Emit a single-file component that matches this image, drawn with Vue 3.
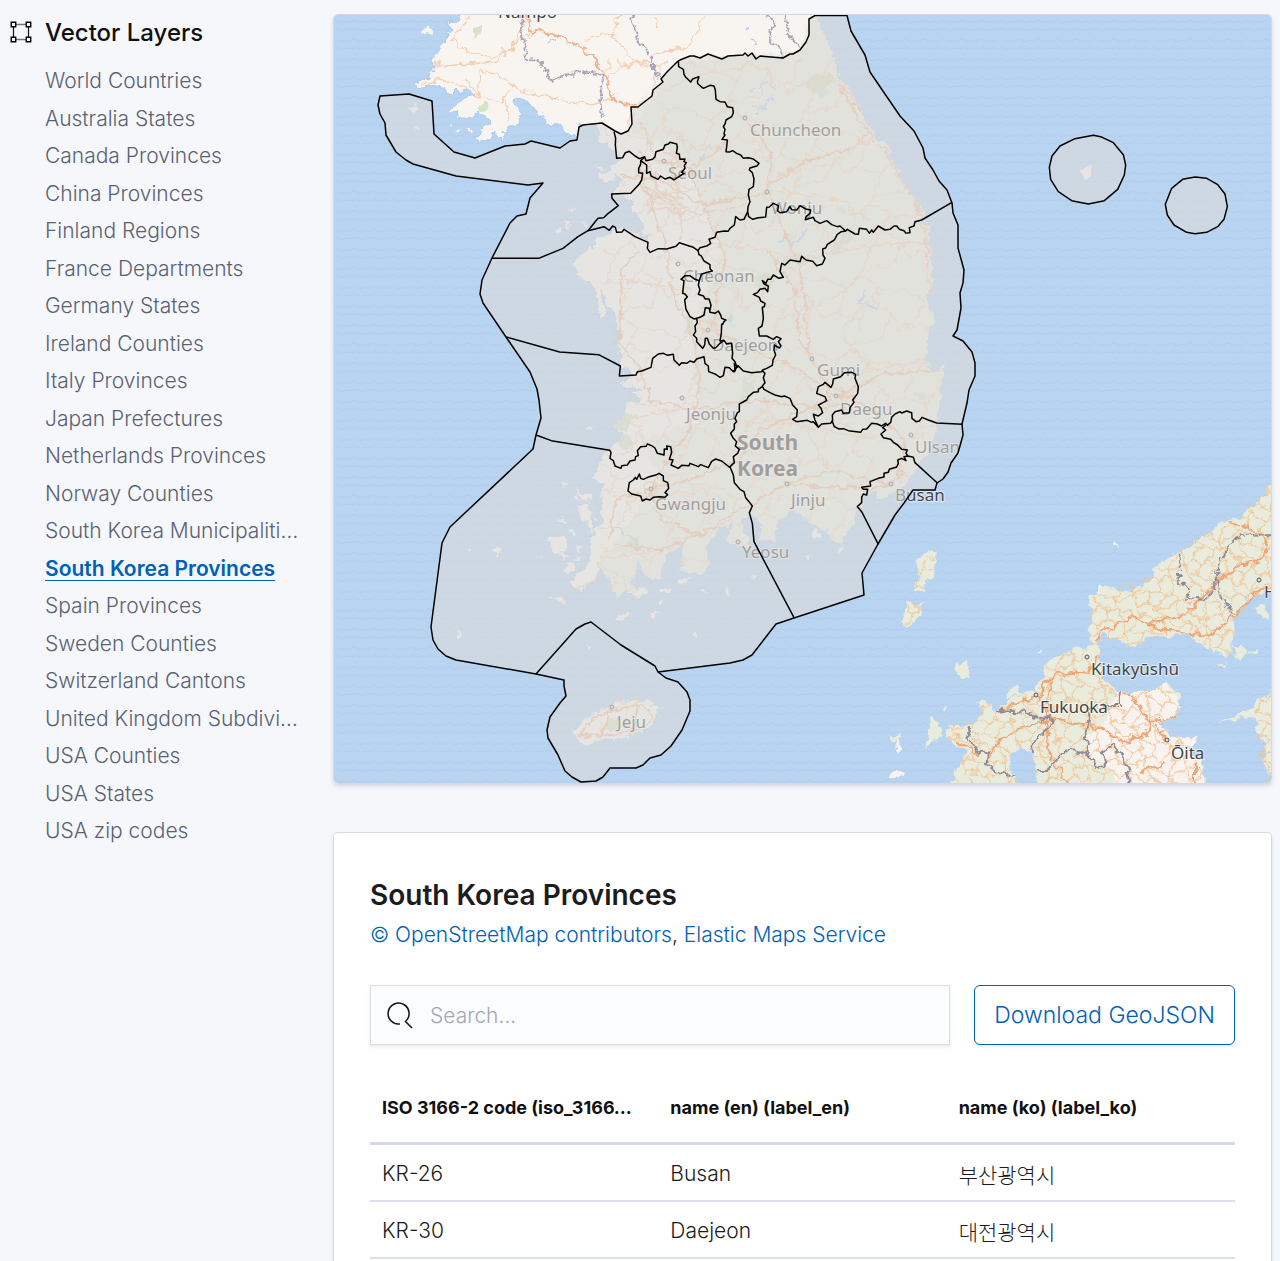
<script setup>
import { ref } from 'vue'

const layers = [
  'World Countries', 'Australia States', 'Canada Provinces', 'China Provinces',
  'Finland Regions', 'France Departments', 'Germany States', 'Ireland Counties',
  'Italy Provinces', 'Japan Prefectures', 'Netherlands Provinces', 'Norway Counties',
  'South Korea Municipalities', 'South Korea Provinces', 'Spain Provinces',
  'Sweden Counties', 'Switzerland Cantons', 'United Kingdom Subdivisions',
  'USA Counties', 'USA States', 'USA zip codes',
]
const selected = ref('South Korea Provinces')
const query = ref('')

const rows = [
  { code: 'KR-26', en: 'Busan', ko: '부산광역시' },
  { code: 'KR-30', en: 'Daejeon', ko: '대전광역시' },
]

// Label anchor (x, y) and town marker (cx, cy) in map units
const cities = [
  { name: 'Nampo', x: 498, y: 18 },
  { name: 'Chuncheon', x: 750, y: 136, cx: 745, cy: 118 },
  { name: 'Seoul', x: 668, y: 179, cx: 664, cy: 161 },
  { name: 'Wonju', x: 771, y: 214, cx: 767, cy: 192 },
  { name: 'Cheonan', x: 683, y: 282, cx: 678, cy: 264 },
  { name: 'Daejeon', x: 712, y: 351, cx: 708, cy: 330 },
  { name: 'Gumi', x: 817, y: 376, cx: 812, cy: 359 },
  { name: 'Jeonju', x: 686, y: 420, cx: 682, cy: 398 },
  { name: 'Daegu', x: 840, y: 415, cx: 836, cy: 396 },
  { name: 'Ulsan', x: 915, y: 453, cx: 911, cy: 435 },
  { name: 'Jinju', x: 791, y: 506, cx: 787, cy: 484 },
  { name: 'Busan', x: 895, y: 501, cx: 891, cy: 484 },
  { name: 'Gwangju', x: 655, y: 510, cx: 651, cy: 489 },
  { name: 'Yeosu', x: 742, y: 558, cx: 738, cy: 542 },
  { name: 'Jeju', x: 617, y: 728, cx: 612, cy: 707 },
  { name: 'Kitakyūshū', x: 1091, y: 675, cx: 1087, cy: 657 },
  { name: 'Fukuoka', x: 1040, y: 713, cx: 1036, cy: 695 },
  { name: 'Ōita', x: 1171, y: 759, cx: 1167, cy: 740 },
  { name: 'Hiroshima', x: 1264, y: 598, cx: 1259, cy: 580 },
]
</script>

<template>
  <div class="page">
    <nav class="sidebar" aria-labelledby="layers-title">
      <svg class="vector-icon" viewBox="0 0 24 24" aria-hidden="true">
        <path d="M7 4.5h10M7 19.5h10" stroke="#777" stroke-width="1.5" />
        <path d="M4.5 7v10M19.5 7v10" stroke="#111" stroke-width="1.2" />
        <path d="M2.3 2.3h4.4v4.4h-4.4zM17.3 2.3h4.4v4.4h-4.4zM2.3 17.3h4.4v4.4h-4.4zM17.3 17.3h4.4v4.4h-4.4z" fill="#fff" stroke="#000" stroke-width="1.4" />
      </svg>
      <div class="layer-menu">
        <h2 id="layers-title">Vector Layers</h2>
        <ul>
          <li v-for="layer in layers" :key="layer">
            <a href="#" :class="{ active: layer === selected }" @click.prevent="selected = layer">{{ layer }}</a>
          </li>
        </ul>
      </div>
    </nav>

    <main class="content">
      <section class="map-panel" aria-label="Map">
        <svg class="map" viewBox="334 15 937 768">
          <defs>
            <pattern id="waves" x="334" y="16" width="19" height="19" patternUnits="userSpaceOnUse">
              <path d="M0 4q2.5 0 4.7 2t4.8 0t4.7 0t4.8-2M0 14q2.5-3 4.7-1t4.8 1t4.7-1t4.8 1" fill="none" stroke="#a9c8e6" stroke-opacity=".5" />
            </pattern>
            <pattern id="mesh" width="44" height="40" patternUnits="userSpaceOnUse" patternTransform="rotate(12)">
              <path d="M0 5L8 9L15 3L25 7L33 1L44 5M8 9L7 20L0 24M7 20L17 23L23 16L25 7M23 16L32 20L40 15L44 24M40 15L33 1L32 0M17 23L16 32L5 35L0 24M16 32L27 36L32 20M27 36L32 40M44 24L37 32L27 36M5 35L9 40M15 3L9 0" fill="none" stroke="#f0c393" stroke-width="1.2" />
            </pattern>
            <pattern id="mesh-wide" width="78" height="74" patternUnits="userSpaceOnUse" patternTransform="rotate(8)">
              <path d="M0 14L20 20L33 5L54 15L78 14M20 20L15 45L0 54M15 45L39 50L46 32L54 15M46 32L69 38L78 54M39 50L34 74M69 38L63 63L34 74M33 5L34 0" fill="none" stroke="#f3c9a8" stroke-width="1.2" />
            </pattern>
            <filter id="rough" x="0" y="0" width="100%" height="100%">
              <feTurbulence type="fractalNoise" baseFrequency=".11" numOctaves="3" seed="7" />
              <feDisplacementMap in="SourceGraphic" scale="11" xChannelSelector="R" yChannelSelector="G" />
            </filter>
            <path id="korea" d="M466 8L458 20L446 22L451 30L443 43L434 57L435 70L430 77L411 84L423 87L435 85L450 92L470 90L475 95L460 100L448 110L455 113L461 118L473 118L480 112L490 120L476 138L486 143L496 133L500 140L505 127L515 125L523 113L513 102L520 98L536 110L550 125L563 127L575 137L580 124L596 126L600 142L612 147L620 160L606 173L623 180L612 190L630 200L634 212L642 226L648 244L640 232L623 228L610 232L596 240L586 250L573 262L580 280L590 283L597 300L600 318L608 316L602 290L611 310L619 333L616 353L623 365L633 377L616 382L623 387L643 388L633 393L640 400L626 403L623 417L610 427L623 432L610 447L596 467L593 480L603 487L600 507L603 520L590 540L591 560L570 583L580 593L596 580L600 567L610 580L616 600L626 590L636 600L633 580L640 560L646 580L660 578L666 557L686 540L680 570L700 577L710 563L706 547L720 527L732 527L727 540L746 550L748 537L740 523L750 513L763 523L760 537L773 543L780 520L793 510L813 523L827 530L840 543L853 523L860 507L867 490L883 500L900 490L910 477L927 457L933 440L940 410L942 390L945 363L933 373L927 363L928 340L933 317L927 300L933 280L930 250L928 227L920 207L897 167L887 147L867 123L857 103L840 77L830 47L815 8Z" />
            <g id="islets">
              <path d="M425 26l8 3-2 4-9-2zM407 106l10-1 3 5-7 4zM413 127l6-2-1 5zM570 259l14 12-6 8zM548 540l16-4 4 14-14 4zM556 520l9-3 3 8zM578 505l14 6-3 12-8-2zM492 550l10-2-5 9zM598 172l13 0 4 8-12 2zM565 565l9-3 0 8-7 3zM550 597l12 0 5 8zM576 488l12 8-3 5zM568 207l8 3-3 3zM580 222l9 1-2 4zM585 521l8 0 0 12zM455 628l7 7-4 0zM632 592l14-6 2 8-10 4zM678 578l11-2-2 8-9 1zM586 646l7 2-3 3zM1080 169l11-4 1 7-6 5-6-4z" />
              <path d="M448 126l5-2-2 5zM456 132l4-2 0 4zM469 128l5 0-3 6zM592 165l14 2-6 4zM566 224l5-3-1 6zM556 230l4-2 0 5zM561 482l6 2-3 5zM572 497l6-2 2 7zM585 494l8 3-3 5zM568 528l7 2-2 7zM576 544l6 3-4 6zM560 552l9 3-5 7zM573 560l5-2 1 5zM538 558l5-2-1 4zM582 505l6 0-2 6zM594 514l4 4-3 4zM587 429l6-5-2 6zM469 548l4-3-2 6zM692 634l6 0-3 5zM650 615l7-3 0 6-6 2zM616 615l12-4-2 8-10 2zM725 588l6 4-5 3zM700 590l5-2 1 5zM660 590l10-4-3 8zM655 600l7-1-2 5zM812 528l10 6-3 6-8-5zM840 544l4 4-5 4zM752 574l6 4-3 3zM806 556l4-1 0 4zM660 660l3 0-1 3zM660 706l3-1-1 4zM890 775l10-6 4 6-10 6zM893 752l6-14 2 4-4 14zM1113 546l4-3 1 5zM1094 590l8-4 0 5zM1036 654l5-2-1 4z" />
              <path d="M575 730L582 722L600 710L626 700L646 700L656 707L656 718L643 732L616 739L596 741L587 745L576 737Z" />
            </g>
            <g id="japan" transform="translate(870 520) scale(.33333)">
              <path d="M1240 -150L1160 -50L1110 -10L1050 10L1000 50L960 85L890 110L850 160L820 200L760 215L700 205L655 230L670 290L655 320L670 380L700 345L750 360L790 385L830 350L900 350L950 340L1000 380L1070 415L1090 370L1090 300L1130 235L1180 215L1240 240Z" />
              <path d="M690 380L665 375L600 390L525 430L515 480L490 510L430 530L385 570L340 545L325 600L290 620L230 615L230 660L290 700L250 760L250 830L450 830L415 710L450 680L490 700L510 830L1010 830L995 730L960 700L985 655L910 655L865 640L860 610L920 590L935 545L920 510L885 490L840 515L830 535L740 515L700 480L690 440Z" />
              <path d="M1240 495L1160 540L1145 570L1040 610L1150 590L1160 630L1190 680L1180 740L1240 830Z" />
              <path d="M185 88L200 95L195 150L165 190L165 215L130 210L145 170L140 130L150 110ZM110 245L150 255L165 240L140 300L115 322L98 310ZM265 422L290 430L300 460L275 475L255 450ZM178 590L215 620L195 670L160 685L180 650ZM1085 385l30-10 20 20-30 20zM1150 260l30-5 20 30-20 15zM410 515l30-15 10 20-40 15zM215 560l20 5-15 10zM60 650l25-10 10 10-20 15zM1130 400l40-20-10 20zM1040 440l30-15-10 15zM320 550l20-10 15 25-20 5z" />
            </g>
            <clipPath id="clip-land">
              <use href="#korea" />
              <path d="M575 730L582 722L600 710L626 700L646 700L656 707L656 718L643 732L616 739L596 741L587 745L576 737Z" />
            </clipPath>
            <clipPath id="clip-honshu"><path d="M1290 468L1233 520L1190 544L1153 573L1110 592L1088 597L1093 617L1088 627L1093 647L1103 635L1133 648L1147 637L1187 633L1226 658L1233 643L1233 620L1263 592L1290 600Z" /></clipPath>
            <clipPath id="clip-kyushu"><path d="M1100 647L1070 650L1045 663L1042 680L1033 690L998 710L983 702L978 720L947 725L947 740L967 753L953 773L953 795L1020 795L1008 757L1020 747L1033 753L1040 795L1207 795L1202 763L1190 753L1198 738L1173 738L1157 723L1177 717L1182 702L1165 683L1150 692L1117 692L1103 680ZM932 550L936 565L924 590L914 590L920 565ZM907 602L923 602L917 620L903 625ZM1290 685L1256 700L1257 730L1265 790L1290 800Z" /></clipPath>
          </defs>

          <!-- Sea -->
          <rect class="sea" x="334" y="15" width="937" height="768" />
          <rect x="334" y="15" width="937" height="768" fill="url(#waves)" />

          <!-- Land, roads and administrative lines -->
          <g filter="url(#rough)">
            <rect x="320" y="0" width="965" height="800" fill="none" />
            <g fill="#f8f4f0" stroke="#a6c9ec" stroke-width="1">
              <use href="#korea" />
              <use href="#islets" stroke="none" />
            </g>
            <use href="#japan" fill="#e9ecdd" />
            <path d="M1117 692L1103 724L1085 735L1086 754L1096 762L1110 765L1120 795L1207 795L1202 763L1190 753L1198 738L1173 738L1157 723L1177 717L1182 702L1165 683L1150 692Z" fill="#f8f3ef" />

            <g clip-path="url(#clip-land)">
              <path d="M677 62L720 58L800 50L815 8L960 200L960 500L840 560L700 600L600 620L600 560L660 480L640 440L700 420L690 330L720 250L690 160L630 130Z" fill="#ebede2" />
              <g fill="#d3e3c6">
                <path d="M806 78l14-6 17 6-7 10-10 10-12-10z" />
                <path d="M826 254l22-24 6 4-18 20zM782 262l20-10 14 6-16 8zM610 427l14-14 10 4-5 14zM616 436l12-2 6 10-10 6zM626 543l10-5 4 6-12 6zM684 318l8-2 2 18-10-2zM743 380l12 0-4 20-10 0zM753 280l14-6 8 6-12 14zM606 720l12-5 0 14-12 0zM915 392l12 2-4 10zM472 30l10-6 0 8-8 4zM477 108l8-5 2 6-9 2z" />
              </g>
              <rect x="600" y="60" width="360" height="690" fill="url(#mesh-wide)" opacity=".85" />
              <g fill="none" stroke="#a8cbee" stroke-width="1.5">
                <path d="M751 88l8 0 6-4 8 1M755 108l10-2 8-8M752 115l14-8M777 242l10-6 6 8 10-8 4-8M790 240l2 10M865 290l-4 14 12 4 8-6M805 300l2 10M700 162l10-18M728 318l6 10M640 550l-10-14-16-10M548 42l8-1M552 98l7-1M744 30l6-1M752 40l4 4" />
              </g>
              <g fill="none" stroke="#f3cfb0" stroke-width="1.3">
                <path d="M470 15L452 40L465 50L490 58L510 50L528 15M433 62L445 66L495 62L520 38L540 30M423 84L440 80L466 88L480 98L478 70L495 74L520 90L560 100L590 105L620 95M583 42L612 32L632 60L650 62M618 15L614 35M654 14L657 30M705 15L690 45L650 56M466 80L478 94L500 104L510 90M505 100l4 20M500 45L506 58" />
                <path d="M608 74L640 60M668 130L700 150L730 142M680 60L712 70L760 66L790 92L812 80L840 84M745 120L770 150L774 175L830 165L870 140L880 112L845 90M770 190L840 200L880 230M620 280L690 290M690 240L770 250L800 262L840 250L930 240M850 290L780 320M870 300L840 330L870 370L930 360M620 420L680 410M630 500L700 490L730 500M720 430L770 420L880 440M800 420L830 470M590 600L600 560L660 550L710 530M580 590L600 575" />
              </g>
              <g fill="none" stroke="#efbd98" stroke-width="2">
                <path d="M640 150L645 190L665 240L672 290L690 330L700 380L690 430L660 470L650 490L615 500L610 540M660 160L690 170L710 220L725 260L718 290L712 330L750 350L800 370L836 396L860 400L905 440L900 480L870 490L787 484M620 175L660 180L700 205L767 192L772 150L750 125M768 190L800 270L810 360L830 385M767 250L795 290L800 340L815 360M836 396L880 375L940 370M690 170L730 140M767 185L810 160L860 145L870 120L842 92M640 250L622 270L620 340L640 370L650 400L690 410L760 400L830 410M651 489L690 480L740 460L760 430L830 400M651 489L660 520L700 535L660 550L615 545M787 484L740 510L700 535M787 484L830 470L890 484M580 735L600 714L640 704L652 712L640 730L600 736ZM610 708l-6 26M638 704l-4 26" />
                <path d="M640 120L660 165L690 160M650 200L690 190M645 205L700 215L745 205M655 180L650 215M670 160L680 200L682 240M640 185L690 210M648 160l10 30 20 10M640 170l40 12M660 150l20 10 4 20M655 195l30 20M840 85L860 120L890 160L915 200L925 230L930 300M702 322l14 0 2 18-16 2zM828 388l14 0 2 16-16 2zM644 484l12 0 0 10-12 2z" stroke-opacity=".8" />
              </g>
              <path d="M527 16L532 30L560 36L585 50L600 66L608 80L612 100L635 106" fill="none" stroke="#efb28a" stroke-width="2" />
              <g fill="none" stroke="#aaa4b6" stroke-width="2">
                <path d="M520 17L523 42L528 58L542 63L552 80L580 71L604 75L600 95L602 118M632 15L638 40L652 56L652 68L661 80M767 15L774 24L768 42L783 50L780 58M786 15L788 34L800 48" stroke-dasharray="8 1" />
              </g>
            </g>

            <g clip-path="url(#clip-honshu)">
              <rect x="1080" y="460" width="200" height="210" fill="url(#mesh)" />
              <g fill="none" stroke="#eda574" stroke-width="2"><path d="M1097 645L1100 632L1135 617L1146 624L1180 617L1195 605L1220 580L1240 565L1262 560L1268 545L1262 533L1225 520M1146 624L1175 632L1208 636L1235 615L1255 592L1272 585" /></g>
              <g fill="none" stroke="#8e8a96" stroke-width="2" stroke-dasharray="6 1"><path d="M1178 550L1180 572L1178 583L1186 584L1188 598L1205 600L1212 590L1217 578L1218 568L1228 547L1240 535L1275 534M1218 580L1225 604L1233 613" /></g>
            </g>
            <g clip-path="url(#clip-kyushu)">
              <rect x="900" y="540" width="380" height="245" fill="url(#mesh)" />
              <g fill="none" stroke="#eda574" stroke-width="2"><path d="M1098 655L1088 672L1058 674L1045 680L1042 695L1015 705L998 712M1100 670L1110 685L1130 694L1150 722L1145 735L1125 742L1100 728L1055 718L1020 728L1000 740L987 760M1150 722L1167 720L1180 714M1167 740L1155 725M955 740L975 752L990 752M1052 680L1046 710L1050 758L1068 782M1165 762L1140 772M1196 764L1196 785" /></g>
              <g fill="none" stroke="#8e8a96" stroke-width="2"><path d="M998 710L1028 712L1040 720L1052 715L1050 728L1032 744L1033 753M1122 692L1120 706L1104 706M1091 706L1085 730L1088 754L1066 750L1054 762L1045 771L1038 771M1088 754L1098 768L1104 765L1102 750L1112 746L1124 758L1130 785M968 728L975 748L988 754L986 764L1000 774L1015 777" /></g>
            </g>
          </g>

          <!-- Place names -->
          <g class="places">
            <template v-for="city in cities" :key="city.name">
              <circle v-if="city.cx" :cx="city.cx" :cy="city.cy" r="2" />
              <text :x="city.x" :y="city.y">{{ city.name }}</text>
            </template>
            <text class="country" x="737" y="450">South</text>
            <text class="country" x="737" y="476">Korea</text>
          </g>

          <!-- Province shapes -->
          <g class="provinces">
            <path class="area" d="M380 96L409 94L432 101L434 134L454 152L475 158L505 146L525 144L531 141L560 148L570 141L577 140L579 127L583 125L602 123L615 131L621 134L628 131L632 124L631 107L638 107L643 103L652 96L653 90L663 82L661 79L667 72L677 62L680 60L690 56L694 56L700 58L708 54L722 59L728 56L743 55L745 53L748 56L752 53L756 59L760 56L783 58L790 54L793 54L800 50L806 42L809 35L809 19L815 15.5L847 15.5L851 31L865 55L870 72L887 97L900 116L914 131L923 148L925 158L933 170L939 181L947 190L952 203L953 213L958 225L958 248L964 270L963 283L960 293L961 308L957 330L953 336L963 341L972 352L975 363L975 376L969 390L967 403L962 424L963 435L958 453L951 463L948 472L943 479L937 483L935 490L913 490L904 503L895 515L878 544L862 573L864 595L794 618L776 624L752 655L743 660L730 663L658 672L666 678L678 682L687 692L690 700L690 711L682 730L671 746L661 755L650 758L643 765L636 768L610 768L603 777L596 781L581 782L572 777L565 771L558 755L548 738L547 730L550 717L560 703L566 696L564 686L564 680L536 674L456 660L446 656L438 649L433 640L431 627L442 543L450 527L533 449L536 435L541 418L539 400L537 389L530 372L506 337L483 303L480 294L482 280L492 258L510 223L517 216L526 214L530 198L543 183L528 185L456 176L413 164L406 160L396 152L386 135L385 123L380 114L378 105Z" />
            <g transform="translate(600 10) scale(.33333)">
              <path d="M235 152L236 170L250 178L252 193L256 200L272 216L278 207L297 200L292 215L294 222L310 235L330 226L342 228L346 240L348 268L360 275L375 276L382 290L398 293L400 308L395 320L378 330L375 342L370 350L375 358L372 372L375 375L366 388L382 390L380 410L378 425L388 426L398 422L410 430L422 435L430 445L445 443L460 447L477 460L472 467L450 474L448 480L457 488L462 507L460 530L447 538L445 555L450 575L444 590L443 605L446 620L458 628L475 623L497 621L500 592L508 591L520 580L535 587L533 603L540 608L560 605L570 590L575 599L590 600L600 587L617 597L632 600L630 610L618 620L616 629L640 622L645 632L660 640L680 632L695 644L712 650L720 648L737 663L742 658L765 672L775 673L778 655L800 658L808 670L815 660L820 667L835 648L855 660L870 658L882 648L890 648L898 658L912 662L917 669L930 668L928 653L942 648L945 635L965 630L1056 577" />
              <path d="M443 605L432 628L420 630L407 620L403 645L390 655L384 664L373 663L350 667L345 682L327 688L332 700L322 707L300 713L294 722L280 712L265 707L238 698L228 709L200 717L175 716L150 727L142 715L144 697L105 680L72 658L66 666L50 667L46 652L38 648L28 661L12 650L-36 662L-66 680L-111 715L-184 745L-324 745" />
              <path d="M294 722L297 734L304 738L312 753L330 764L330 776L337 783L322 787L304 793L298 812" />
              <path d="M42 365L47 385L46 405L50 445L68 443L76 428L88 424L105 438L118 446L134 440L138 452L158 448L165 440L168 425L190 418L195 405L205 402L210 397L230 402L232 412L229 430L238 433L240 448L255 447L252 455L259 458L253 467L255 475L245 487L252 490L232 503L222 510L210 502L195 507L182 498L174 508L153 498L150 485L140 490L140 465L122 452L135 440M122 452L122 462L116 476L116 488L128 490L125 510L118 522L92 550L35 552L36 565L55 587L20 614L11 623L-6 625L-36 662" />
              <path d="M737 663L724 665L712 673L703 690L682 703L677 714L668 717L669 735L675 745L667 762L650 767L638 754L618 750L605 739L600 755L570 750L555 765L545 760L540 785L550 802L537 805L520 795L512 808L503 808L498 820L487 812L492 822L505 828L503 845L495 835L480 838L472 848L460 853L478 862L482 873L495 880L493 890L487 892L490 925L486 948L475 955L478 978L500 978L520 988L530 980L543 986L535 995L543 1008L538 1014L523 1005L522 1020L527 1035L519 1050L517 1066L500 1075L488 1080L485 1085L455 1088L430 1083L415 1068L403 1078" />
            </g>
            <g transform="translate(600 230) scale(.33333)">
              <path d="M298 152L295 165L300 180L295 193L310 198L316 207L327 207L333 225L330 240" />
              <path d="M298 152L285 148L270 137L255 137L243 148L252 152L248 190L255 192L262 200L254 210L258 238L270 260L283 267L300 262L312 255L316 233L328 235L330 247L345 250L355 243L362 255L365 265L378 270L372 275L368 283L365 283L364 310L360 333L372 331L380 342L395 340L398 370L396 385L405 395L410 410L403 427M290 265L292 278L285 288L287 305L280 315L290 325L290 335L308 355L314 345L316 325L322 325L328 342L340 355L347 353L360 340L372 331" />
              <path d="M-281 321L-121 366L-4 374L61 408L58 438L108 435L112 425L125 423L153 412L158 385L175 372L190 370L203 376L220 373L222 390L238 406L245 398L260 400L270 393L282 397L290 387L312 380L315 400L325 408L326 425L345 432L360 442L370 437L375 412L388 413L400 425L405 418L403 400L412 412L415 405" />
              <path d="M487 422L495 430L490 443L495 458L487 468L492 478L510 488L525 495L545 500L553 498L570 505L578 525L592 540L590 560L578 568L590 575L622 571L635 577L640 575L655 592L665 582L692 580L697 572M655 592L645 570L640 553L655 558L668 548L663 535L655 525L665 520L680 512L675 500L650 490L655 470L670 463L675 457L693 472L698 462L700 447L722 440L733 428L755 427L767 433L765 445L775 470L773 490L758 510L762 517L750 533L748 548L730 550L725 540L705 545L697 555L698 577L703 590L717 597L730 596L745 602L782 607L788 598L800 597L815 580L832 582L845 588L857 580L862 586L872 577L875 562L885 552L900 545L905 549L920 543L935 548L936 565L948 575L958 573L966 562L985 570L1010 579L1087 583" />
              <path d="M487 470L475 478L475 485L460 487L445 500L440 510L418 522L418 545L412 548L405 565L410 575L403 582L403 597L392 610L400 625L410 635L406 648L418 658L413 670L400 680L403 698L390 710L400 735L403 758L420 778L432 785L437 803L447 815L457 828L448 848L457 880L462 935L582 1163" />
            </g>
            <g transform="translate(600 390) scale(.33333)">
              <path d="M-192 135L-146 152L29 181L33 187L30 205L40 212L45 228L63 235L65 227L82 225L90 213L105 210L107 200L115 197L112 182L122 170L138 169L142 162L155 167L165 174L172 190L192 195L193 177L202 178L200 168L212 170L215 187L208 208L219 210L213 225L235 235L245 226L267 227L270 220L295 230L302 224L325 233L335 214L347 207L365 213L390 233" />
              <path d="M118 252L122 265L130 268L148 260L170 254L177 250L190 258L190 272L203 278L206 295L195 308L203 314L195 322L180 320L160 322L150 330L138 327L127 333L122 318L95 312L84 303L88 278L100 270L106 262L110 268Z" />
              <path d="M858 105L848 113L857 120L843 132L850 143L872 148L880 157L893 165L905 178L922 180L918 190L924 198L912 200L918 212L905 205L893 210L895 220L890 231L868 238L865 247L852 250L852 261L835 265L810 275L812 288L785 292L790 298L803 298L800 315L790 312L785 322L785 338L772 350L785 365L835 463M924 198L940 202L945 218L1012 279" />
            </g>
            <path d="M536 674L576 629L585 624L591 622L621 645L655 666L658 672" />
            <g class="isles" transform="translate(960 10) scale(.33333)">
              <path d="M400 376L422 380L460 398L490 434L497 465L493 495L473 538L433 572L385 582L335 572L295 545L272 508L268 472L276 438L300 408L345 386Z" />
              <path d="M705 501L740 505L772 523L795 552L802 590L792 628L773 650L740 667L705 671L680 667L642 645L622 615L616 583L635 535L668 508Z" />
            </g>
          </g>
        </svg>
      </section>

      <section class="details" aria-labelledby="details-title">
        <h1 id="details-title">South Korea Provinces</h1>
        <p class="credits"><a href="#">© OpenStreetMap contributors</a>, <a href="#">Elastic Maps Service</a></p>

        <div class="toolbar">
          <label class="search">
            <svg viewBox="0 0 30 30" aria-hidden="true">
              <path d="M15 24A10.5 10.5 0 1 1 20.5 21.5L27 28" fill="none" stroke="#111" stroke-width="1.5" />
            </svg>
            <input v-model="query" type="text" placeholder="Search..." aria-label="Search" />
          </label>
          <button type="button">Download GeoJSON</button>
        </div>

        <table>
          <thead>
            <tr>
              <th scope="col">ISO 3166-2 code (iso_3166_2)</th>
              <th scope="col">name (en) (label_en)</th>
              <th scope="col">name (ko) (label_ko)</th>
            </tr>
          </thead>
          <tbody>
            <tr v-for="row in rows" :key="row.code">
              <td>{{ row.code }}</td>
              <td>{{ row.en }}</td>
              <td lang="ko">{{ row.ko }}</td>
            </tr>
          </tbody>
        </table>
      </section>
    </main>
  </div>
</template>

<style>
body {
  margin: 0;
  background: #f5f7fb;
}
</style>

<style scoped>
.page {
  box-sizing: border-box;
  display: flex;
  gap: 32px;
  min-height: 100vh;
  padding: 14px 8px 0 9px;
  font-family: Inter, "Noto Sans CJK KR", sans-serif;
  font-size: 21px;
  font-weight: 300;
  color: #1a1c21;
}

h1,
h2,
p,
ul {
  margin: 0;
  padding: 0;
}

a {
  color: #0061b5;
  text-decoration: none;
}

/* Sidebar */
.sidebar {
  display: flex;
  flex: 0 0 292px;
  gap: 12px;
}

.vector-icon {
  flex: none;
  width: 24px;
  height: 24px;
  margin-top: 6px;
}

.layer-menu {
  flex: 1;
  min-width: 0;
  padding-top: 1px;
}

h2 {
  margin-bottom: 14px;
  font-size: 24px;
  font-weight: 550;
  line-height: 36px;
  color: #111;
}

ul {
  display: grid;
  gap: 6px;
  list-style: none;
}

li {
  overflow: hidden;
  line-height: 1.5;
  text-overflow: ellipsis;
  white-space: nowrap;
  color: #5a6272;
}

li a {
  color: inherit;
}

li a.active {
  font-weight: 600;
  color: #0061b5;
  text-decoration: underline;
  text-decoration-thickness: 1px;
  text-underline-offset: 4px;
}

/* Map */
.content {
  display: flex;
  flex: 1;
  flex-direction: column;
  gap: 49px;
  min-width: 0;
}

.map-panel {
  overflow: hidden;
  border: 1px solid #d3dae6;
  border-bottom: 0;
  border-radius: 5px;
  box-shadow: 0 3px 4px rgba(100, 115, 150, 0.25);
}

.map {
  display: block;
  width: 100%;
  height: auto;
}

.sea {
  fill: #b8d4f0;
}

.places text {
  font: 17px "Noto Sans", sans-serif;
  fill: #444;
  stroke: rgba(255, 255, 255, 0.6);
  stroke-width: 2px;
  paint-order: stroke;
}

.places .country {
  font-size: 21px;
  font-weight: 700;
}

.places circle {
  fill: #ddd;
  stroke: #555;
}

.provinces path {
  fill: none;
  stroke: #000;
  stroke-width: 1.5px;
  stroke-linejoin: round;
}

.provinces g path {
  stroke-width: 4.5px;
}

.provinces .area,
.provinces .isles path {
  fill: rgba(220, 219, 216, 0.6);
}

/* Details */
.details {
  flex: 1;
  padding: 36px;
  border: 1px solid #d3dae6;
  border-bottom: 0;
  border-radius: 5px 5px 0 0;
  background: #fff;
  box-shadow: 0 3px 4px rgba(100, 115, 150, 0.15);
}

h1 {
  margin-top: 5px;
  font-size: 28px;
  font-weight: 600;
  line-height: 42px;
}

.credits {
  margin-bottom: 34px;
  padding-top: 2px;
  line-height: 33px;
}

.toolbar {
  display: flex;
  gap: 24px;
}

.search {
  box-sizing: border-box;
  display: flex;
  flex: 1;
  gap: 15px;
  align-items: center;
  height: 60px;
  padding: 0 14px;
  border: 1px solid #dcdfe5;
  background: #fbfcfd;
  box-shadow: 0 2px 3px rgba(100, 110, 130, 0.15);
}

.search svg {
  flex: none;
  width: 30px;
  height: 30px;
}

.search input {
  flex: 1;
  min-width: 0;
  padding: 0;
  border: 0;
  outline: 0;
  background: transparent;
  font: inherit;
  color: inherit;
}

.search input::placeholder {
  color: #a4a8b0;
}

button {
  height: 60px;
  padding: 0 19px;
  border: 1px solid #0061b5;
  border-radius: 6px;
  background: #fff;
  box-shadow: 0 2px 3px rgba(100, 110, 130, 0.12);
  font: 300 23px Inter, sans-serif;
  color: #0061b5;
}

table {
  width: 100%;
  margin-top: 24px;
  border-collapse: collapse;
  table-layout: fixed;
}

th,
td {
  overflow: hidden;
  padding: 2px 12px 0;
  text-align: left;
  text-overflow: ellipsis;
  white-space: nowrap;
}

th {
  height: 69px;
  padding: 4px 20px 0 12px;
  border-bottom: 3px solid #d3dae6;
  font-size: 18px;
  font-weight: 700;
  color: #111;
}

td {
  height: 53px;
  border-bottom: 2px solid #d9e0ea;
}
</style>
